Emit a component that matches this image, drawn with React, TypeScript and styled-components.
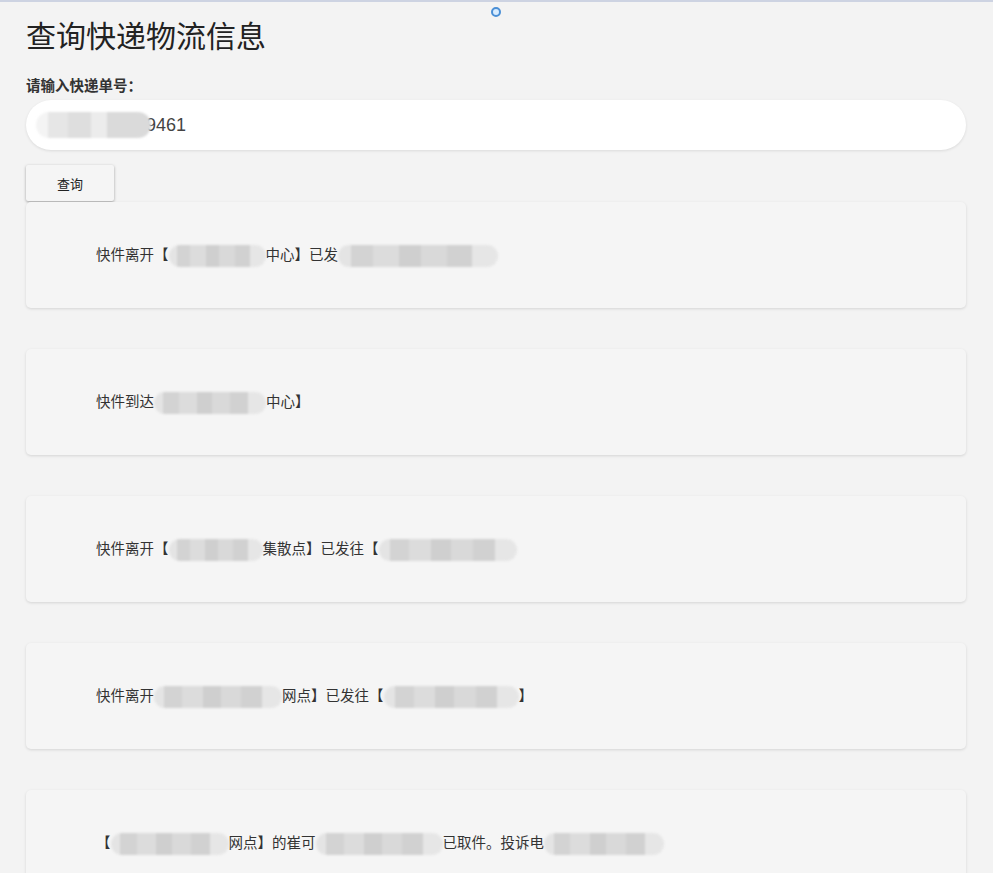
import React from "react";
import styled, { createGlobalStyle } from "styled-components";

const GlobalStyle = createGlobalStyle`
  html, body {
    margin: 0;
    padding: 0;
    background: #f3f3f3;
  }
  body {
    font-family: "Liberation Sans", "Noto Sans CJK SC", sans-serif;
    color: #333;
  }
`;

const Page = styled.div`
  position: relative;
  min-height: 873px;
  border-top: 2px solid #cdd3e2;
  box-sizing: border-box;
  padding: 0 27px 0 26px;
`;

const Handle = styled.div`
  position: absolute;
  top: 5px;
  left: 491px;
  width: 6px;
  height: 6px;
  border-radius: 50%;
  border: 2px solid #4a8fd6;
  background: #d8ecff;
`;

const Title = styled.h1`
  margin: 0;
  padding-top: 16px;
  font-size: 30px;
  line-height: 38px;
  font-weight: 400;
  color: #222;
`;

const Label = styled.div`
  margin-top: 19px;
  font-family: "Noto Sans CJK SC", sans-serif;
  font-size: 14.5px;
  line-height: 20px;
  font-weight: 700;
  color: #333;
`;

const InputWrap = styled.div`
  position: relative;
  margin-top: 5px;
`;

const Input = styled.input`
  display: block;
  width: 100%;
  height: 50px;
  box-sizing: border-box;
  border: none;
  outline: none;
  border-radius: 25px;
  background: #fff;
  box-shadow: 0 1px 3px rgba(0, 0, 0, 0.1);
  padding-left: 110px;
  font-family: "Liberation Sans", sans-serif;
  font-size: 18px;
  color: #444;
`;

const Redact = styled.span<{ $w: number; $h?: number }>`
  display: inline-block;
  width: ${(p) => p.$w}px;
  height: ${(p) => p.$h ?? 22}px;
  vertical-align: middle;
  border-radius: 11px;
  background: linear-gradient(
    90deg,
    #e4e4e4 0 8%,
    #d3d3d3 8% 22%,
    #dcdcdc 22% 38%,
    #cfcfcf 38% 52%,
    #d9d9d9 52% 68%,
    #d1d1d1 68% 84%,
    #e6e6e6 84% 100%
  );
  filter: blur(1px);
`;

const InputRedact = styled(Redact)`
  position: absolute;
  left: 10px;
  top: 12px;
  border-radius: 14px;
  background: linear-gradient(
    90deg,
    #f4f4f4 0 10%,
    #e6e6e6 10% 28%,
    #dedede 28% 48%,
    #ececec 48% 62%,
    #dadada 62% 100%
  );
`;

const Button = styled.button`
  display: block;
  margin-top: 15px;
  width: 88px;
  height: 36px;
  border: none;
  border-radius: 2px;
  background: #f5f5f5;
  box-shadow: 0 1px 3px rgba(0, 0, 0, 0.35);
  font-family: "Noto Sans CJK SC", sans-serif;
  font-size: 13px;
  color: #222;
  cursor: pointer;
`;

const List = styled.div`
  display: flex;
  flex-direction: column;
  gap: 41px;
  margin-top: 1px;
`;

const Card = styled.div`
  display: flex;
  align-items: center;
  height: 106px;
  padding-left: 70px;
  border-radius: 5px;
  background: #f5f5f5;
  box-shadow: 0 1px 3px rgba(0, 0, 0, 0.13);
  font-family: "Noto Sans CJK SC", sans-serif;
  font-size: 14.5px;
  color: #333;
  white-space: nowrap;
`;

type Part = string | number;

const events: Part[][] = [
  ["快件离开【", 97, "中心】已发", 160],
  ["快件到达", 112, "中心】"],
  ["快件离开【", 94, "集散点】已发往【", 138],
  ["快件离开", 128, "网点】已发往【", 135, "】"],
  ["【", 118, "网点】的崔可", 127, "已取件。投诉电", 120],
];

const Line = ({ parts }: { parts: Part[] }) => (
  <span>
    {parts.map((p, i) =>
      typeof p === "number" ? <Redact key={i} $w={p} aria-hidden /> : <span key={i}>{p}</span>
    )}
  </span>
);

export default function App() {
  return (
    <>
      <GlobalStyle />
      <Page>
        <Handle />
        <Title>查询快递物流信息</Title>
        <Label>请输入快递单号：</Label>
        <InputWrap>
          <Input readOnly value="09461" />
          <InputRedact $w={115} $h={26} aria-hidden />
        </InputWrap>
        <Button>查询</Button>
        <List>
          {events.map((parts, i) => (
            <Card key={i}>
              <Line parts={parts} />
            </Card>
          ))}
        </List>
      </Page>
    </>
  );
}
